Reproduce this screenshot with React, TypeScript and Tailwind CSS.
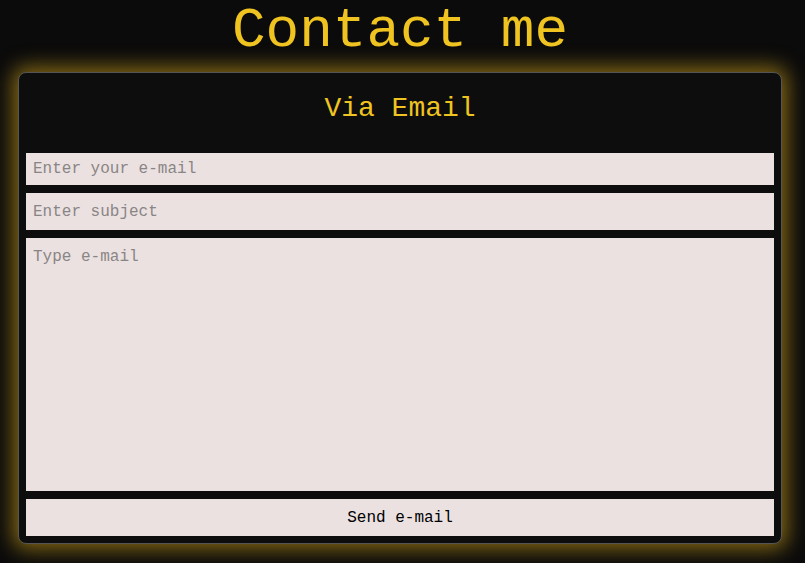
export default function App() {
  const mono = "font-['Liberation_Mono','Courier_New',monospace]";
  return (
    <div className={`min-h-[563px] w-full bg-[#0b0b0b] ${mono}`}>
      <div className="w-[800px]">
        <h1 className="pt-[1px] text-center text-[56px] leading-[61px] text-[#f0c420]">
          Contact me
        </h1>
        <form
          className="mx-[18px] mt-[10px] flex flex-col rounded-lg border border-[#555555] bg-[#0d0d0d] px-[7px] pb-[7px] pt-[20px] shadow-[0_0_20px_5px_rgba(185,145,25,0.7)]"
          onSubmit={(e) => e.preventDefault()}
        >
          <h2 className="mb-[28px] text-center text-[28px] leading-[32px] text-[#f0c420]">
            Via Email
          </h2>
          <div className="flex flex-col gap-2">
            <input
              type="email"
              placeholder="Enter your e-mail"
              className="h-8 w-full bg-[#ebe1e1] px-[7px] text-[16px] text-black outline-none placeholder:text-[#8a8585]"
            />
            <input
              type="text"
              placeholder="Enter subject"
              className="h-[37px] w-full bg-[#ebe1e1] px-[7px] text-[16px] text-black outline-none placeholder:text-[#8a8585]"
            />
            <textarea
              placeholder="Type e-mail"
              className="h-[253px] w-full resize-none bg-[#ebe1e1] px-[7px] py-[7px] text-[16px] text-black outline-none placeholder:text-[#8a8585]"
            />
            <button
              type="submit"
              className="h-[37px] w-full bg-[#ebe1e1] text-[16px] text-black"
            >
              Send e-mail
            </button>
          </div>
        </form>
      </div>
    </div>
  );
}
